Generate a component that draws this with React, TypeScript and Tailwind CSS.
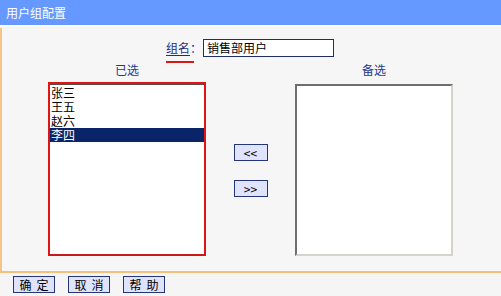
import React from "react";

const font = { fontFamily: '"Noto Sans CJK SC", "Liberation Sans", sans-serif' };

const chosen = ["张三", "王五", "赵六", "李四"];

function SmallButton({ label, className = "" }: { label: string; className?: string }) {
  return (
    <button
      className={`h-[17px] flex items-center justify-center gap-[5px] border border-[#25357a] bg-[#dfe3fb] text-[12px] leading-none text-black ${className}`}
    >
      {label.split(" ").map((part) => (
        <span key={part}>{part}</span>
      ))}
    </button>
  );
}

export default function App() {
  return (
    <div className="w-[501px] h-[296px] bg-[#f5f5f5] flex flex-col overflow-hidden" style={font}>
      <div className="h-[25px] bg-[#6699ff] text-white text-[12px] leading-none flex items-center pl-[6px]">
        用户组配置
      </div>
      <div className="h-[2px] bg-white" />
      <div className="h-[1px] bg-[#fbf1d6]" />

      <div className="h-[243px] border-l-2 border-[#f6c584] bg-[#f6f6f6] flex flex-col">
        <div className="mt-[11px] flex items-start">
          <div className="ml-[164px] flex flex-col items-start">
            <span className="h-[18px] text-[12px] leading-[18px] text-[#1b2f8a] whitespace-nowrap">
              <span className="underline underline-offset-2">组名</span>：
            </span>
            <div className="mt-[4px] w-[28px] h-[2px] shrink-0 bg-[#d81818]" />
          </div>
          <div className="ml-[1px] w-[131px] h-[18px] border border-[#1f2d6b] bg-white text-[12px] leading-[16px] pl-[3px] text-black">
            销售部用户
          </div>
        </div>

        <div className="mt-[1px] ml-[46px] flex">
          <div className="w-[158px] flex flex-col">
            <div className="text-center text-[12px] leading-[12px] text-[#1c3a8f]">已选</div>
            <div className="mt-[6px] h-[174px] border-2 border-[#e01414] border-b-[#c81a1a] bg-white flex flex-col">
              <div className="border-t border-[#5a4a4a] pt-[1px] flex flex-col">
                {chosen.map((name, i) => (
                  <div
                    key={name}
                    className={`h-[14px] text-[12px] leading-[14px] pl-[1px] ${
                      i === 3 ? "bg-[#0a246a] text-white" : "text-black"
                    }`}
                  >
                    {name}
                  </div>
                ))}
              </div>
            </div>
          </div>

          <div className="w-[89px] flex flex-col items-center pt-[80px]">
            <SmallButton label="<<" className="w-[34px]" />
            <SmallButton label=">>" className="w-[34px] mt-[19px]" />
          </div>

          <div className="w-[158px] flex flex-col">
            <div className="text-center text-[12px] leading-[12px] text-[#1c3a8f]">备选</div>
            <div className="mt-[8px] h-[172px] border-2 border-t-[#6e6e6e] border-l-[#6e6e6e] border-b-[#d6d3cc] border-r-[#d6d3cc] bg-white" />
          </div>
        </div>
      </div>

      <div className="h-[2px] bg-[#f5c07c]" />
      <div className="flex-1 flex items-start gap-[13px] pl-[13px] pt-[3px]">
        <SmallButton label="确 定" className="w-[42px]" />
        <SmallButton label="取 消" className="w-[42px]" />
        <SmallButton label="帮 助" className="w-[42px]" />
      </div>
    </div>
  );
}
